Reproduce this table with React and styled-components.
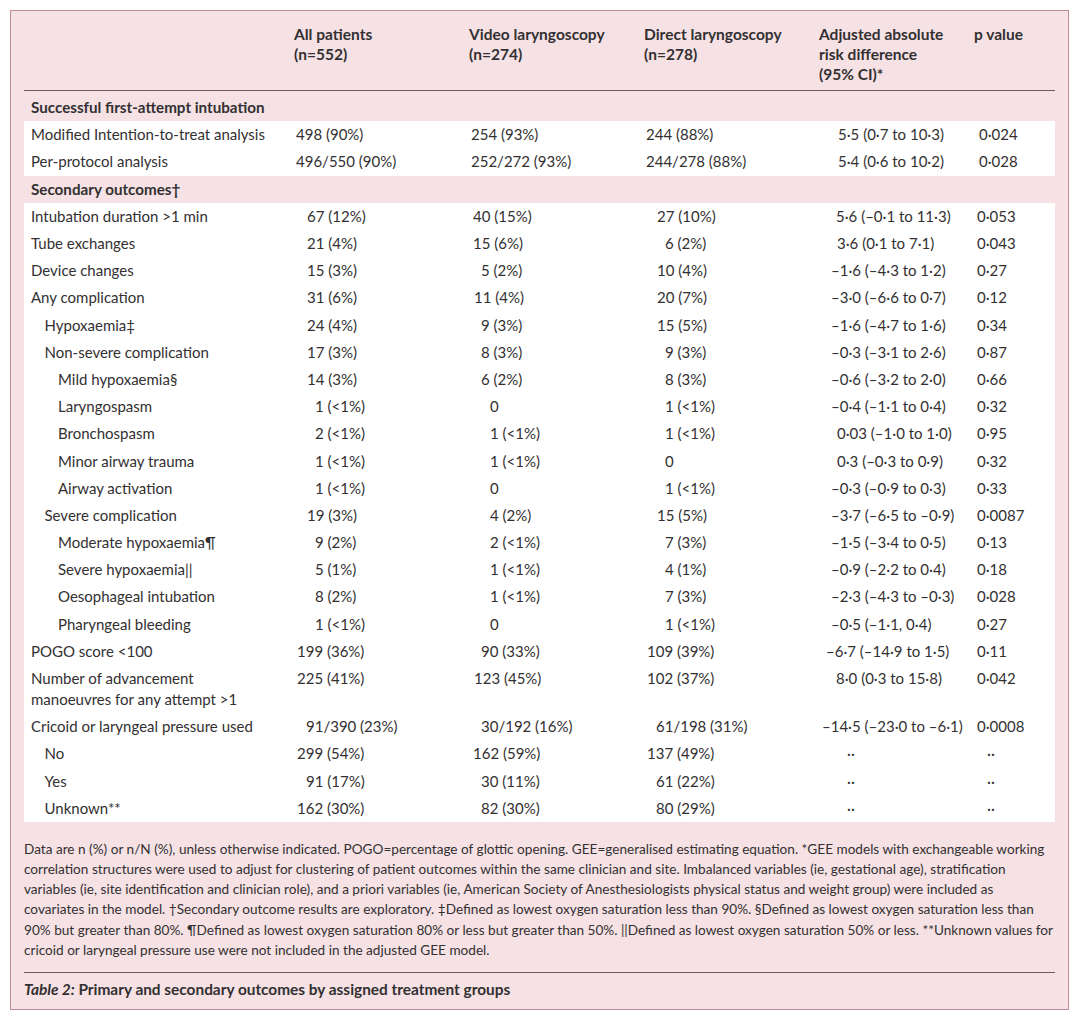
import styled, { createGlobalStyle } from "styled-components";

const GlobalStyle = createGlobalStyle`
  body {
    margin: 0;
    background: #ffffff;
    font-family: Lato, "Open Sans", sans-serif;
    color: #333032;
  }
`;

const COLS = "270px 175px 175px 175px 155px 1fr";

const Frame = styled.div`
  box-sizing: border-box;
  width: 1059px;
  margin: 10px 0 0 10px;
  padding: 0 13px 10px 13px;
  background: #f6e2e4;
  border: 1px solid #bd8d99;
`;

const HeaderRow = styled.div`
  display: grid;
  grid-template-columns: ${COLS};
  padding: 13px 0 6px;
  border-bottom: 1px solid #6d5d61;
  font-weight: 700;
  font-size: 15.5px;
  line-height: 20px;
`;

const HeadCell = styled.div`
  white-space: nowrap;
`;

const SectionTitle = styled.div`
  padding: ${(p) => (p.$first ? "6.1px" : "3.1px")} 7px 3.1px;
  font-weight: 700;
  font-size: 15.2px;
  line-height: 21px;
`;

const Band = styled.div`
  background: #ffffff;
`;

const Row = styled.div`
  display: grid;
  grid-template-columns: ${COLS};
  padding: 3.1px 0;
  font-size: 15px;
  line-height: 21px;
`;

const Label = styled.div`
  padding-left: ${(p) => 7 + p.$level * 13.5}px;
`;

const Cell = styled.div`
  padding-left: ${(p) => p.$indent}px;
  white-space: nowrap;
`;

const Notes = styled.p`
  margin: 17px 0 0;
  font-size: 13.6px;
  line-height: 20.2px;
`;

const Caption = styled.div`
  margin-top: 12px;
  padding-top: 6px;
  border-top: 1px solid #6d5d61;
  font-weight: 700;
  font-size: 15.4px;
  line-height: 20px;
  em {
    font-style: italic;
  }
`;

const primary = [
  ["Modified Intention-to-treat analysis", 0, [["498 (90%)", 2], ["254 (93%)", 2], ["244 (88%)", 2], ["5·5 (0·7 to 10·3)", 19], ["0·024", 5]]],
  ["Per-protocol analysis", 0, [["496/550 (90%)", 2], ["252/272 (93%)", 2], ["244/278 (88%)", 2], ["5·4 (0·6 to 10·2)", 19], ["0·028", 5]]],
];

const secondary = [
  ["Intubation duration >1 min", 0, [["67 (12%)", 13], ["40 (15%)", 4], ["27 (10%)", 13], ["5·6 (–0·1 to 11·3)", 17], ["0·053", 3]]],
  ["Tube exchanges", 0, [["21 (4%)", 13], ["15 (6%)", 4], ["6 (2%)", 21], ["3·6 (0·1 to 7·1)", 18], ["0·043", 3]]],
  ["Device changes", 0, [["15 (3%)", 13], ["5 (2%)", 12], ["10 (4%)", 13], ["–1·6 (–4·3 to 1·2)", 12], ["0·27", 3]]],
  ["Any complication", 0, [["31 (6%)", 13], ["11 (4%)", 5], ["20 (7%)", 13], ["–3·0 (–6·6 to 0·7)", 12], ["0·12", 3]]],
  ["Hypoxaemia‡", 1, [["24 (4%)", 13], ["9 (3%)", 12], ["15 (5%)", 13], ["–1·6 (–4·7 to 1·6)", 12], ["0·34", 3]]],
  ["Non-severe complication", 1, [["17 (3%)", 13], ["8 (3%)", 12], ["9 (3%)", 21], ["–0·3 (–3·1 to 2·6)", 12], ["0·87", 3]]],
  ["Mild hypoxaemia§", 2, [["14 (3%)", 13], ["6 (2%)", 12], ["8 (3%)", 21], ["–0·6 (–3·2 to 2·0)", 12], ["0·66", 3]]],
  ["Laryngospasm", 2, [["1 (<1%)", 21], ["0", 21], ["1 (<1%)", 21], ["–0·4 (–1·1 to 0·4)", 12], ["0·32", 3]]],
  ["Bronchospasm", 2, [["2 (<1%)", 21], ["1 (<1%)", 21], ["1 (<1%)", 21], ["0·03 (–1·0 to 1·0)", 18], ["0·95", 3]]],
  ["Minor airway trauma", 2, [["1 (<1%)", 21], ["1 (<1%)", 21], ["0", 21], ["0·3 (–0·3 to 0·9)", 18], ["0·32", 3]]],
  ["Airway activation", 2, [["1 (<1%)", 21], ["0", 21], ["1 (<1%)", 21], ["–0·3 (–0·9 to 0·3)", 12], ["0·33", 3]]],
  ["Severe complication", 1, [["19 (3%)", 13], ["4 (2%)", 21], ["15 (5%)", 13], ["–3·7 (–6·5 to –0·9)", 12], ["0·0087", 3]]],
  ["Moderate hypoxaemia¶", 2, [["9 (2%)", 21], ["2 (<1%)", 21], ["7 (3%)", 21], ["–1·5 (–3·4 to 0·5)", 12], ["0·13", 3]]],
  ["Severe hypoxaemia||", 2, [["5 (1%)", 21], ["1 (<1%)", 21], ["4 (1%)", 21], ["–0·9 (–2·2 to 0·4)", 12], ["0·18", 3]]],
  ["Oesophageal intubation", 2, [["8 (2%)", 21], ["1 (<1%)", 21], ["7 (3%)", 21], ["–2·3 (–4·3 to –0·3)", 12], ["0·028", 3]]],
  ["Pharyngeal bleeding", 2, [["1 (<1%)", 21], ["0", 21], ["1 (<1%)", 21], ["–0·5 (–1·1, 0·4)", 12], ["0·27", 3]]],
  ["POGO score <100", 0, [["199 (36%)", 3], ["90 (33%)", 12], ["109 (39%)", 3], ["–6·7 (–14·9 to 1·5)", 7], ["0·11", 3]]],
  [["Number of advancement", "manoeuvres for any attempt >1"], 0, [["225 (41%)", 3], ["123 (45%)", 5], ["102 (37%)", 3], ["8·0 (0·3 to 15·8)", 17], ["0·042", 3]]],
  ["Cricoid or laryngeal pressure used", 0, [["91/390 (23%)", 12], ["30/192 (16%)", 12], ["61/198 (31%)", 12], ["–14·5 (–23·0 to –6·1)", 3], ["0·0008", 3]]],
  ["No", 1, [["299 (54%)", 3], ["162 (59%)", 4], ["137 (49%)", 3], ["··", 28], ["··", 13]]],
  ["Yes", 1, [["91 (17%)", 12], ["30 (11%)", 12], ["61 (22%)", 12], ["··", 28], ["··", 13]]],
  ["Unknown**", 1, [["162 (30%)", 3], ["82 (30%)", 12], ["80 (29%)", 12], ["··", 28], ["··", 13]]],
];

function DataRow({ label, level, cells }) {
  return (
    <Row>
      <Label $level={level}>
        {Array.isArray(label) ? (
          <>
            {label[0]}
            <br />
            {label[1]}
          </>
        ) : (
          label
        )}
      </Label>
      {cells.map(([text, indent], i) => (
        <Cell key={i} $indent={indent}>
          {text}
        </Cell>
      ))}
    </Row>
  );
}

export default function App() {
  return (
    <>
      <GlobalStyle />
      <Frame>
        <HeaderRow>
          <div />
          <HeadCell>
            All patients
            <br />
            (n=552)
          </HeadCell>
          <HeadCell>
            Video laryngoscopy
            <br />
            (n=274)
          </HeadCell>
          <HeadCell>
            Direct laryngoscopy
            <br />
            (n=278)
          </HeadCell>
          <HeadCell>
            Adjusted absolute
            <br />
            risk difference
            <br />
            (95% CI)*
          </HeadCell>
          <HeadCell>p value</HeadCell>
        </HeaderRow>

        <SectionTitle $first>Successful first-attempt intubation</SectionTitle>
        <Band>
          {primary.map(([label, level, cells], i) => (
            <DataRow key={i} label={label} level={level} cells={cells} />
          ))}
        </Band>

        <SectionTitle>Secondary outcomes†</SectionTitle>
        <Band>
          {secondary.map(([label, level, cells], i) => (
            <DataRow key={i} label={label} level={level} cells={cells} />
          ))}
        </Band>

        <Notes>
          Data are n (%) or n/N (%), unless otherwise indicated. POGO=percentage of glottic opening.
          GEE=generalised estimating equation. *GEE models with exchangeable working correlation
          structures were used to adjust for clustering of patient outcomes within the same clinician
          and site. Imbalanced variables (ie, gestational age), stratification variables (ie, site
          identification and clinician role), and a priori variables (ie, American Society of
          Anesthesiologists physical status and weight group) were included as covariates in the
          model. †Secondary outcome results are exploratory. ‡Defined as lowest oxygen saturation
          less than 90%. §Defined as lowest oxygen saturation less than 90% but greater than 80%.
          ¶Defined as lowest oxygen saturation 80% or less but greater than 50%. ||Defined as lowest
          oxygen saturation 50% or less. **Unknown values for cricoid or laryngeal pressure use were
          not included in the adjusted GEE model.
        </Notes>

        <Caption>
          <em>Table 2:</em> Primary and secondary outcomes by assigned treatment groups
        </Caption>
      </Frame>
    </>
  );
}
